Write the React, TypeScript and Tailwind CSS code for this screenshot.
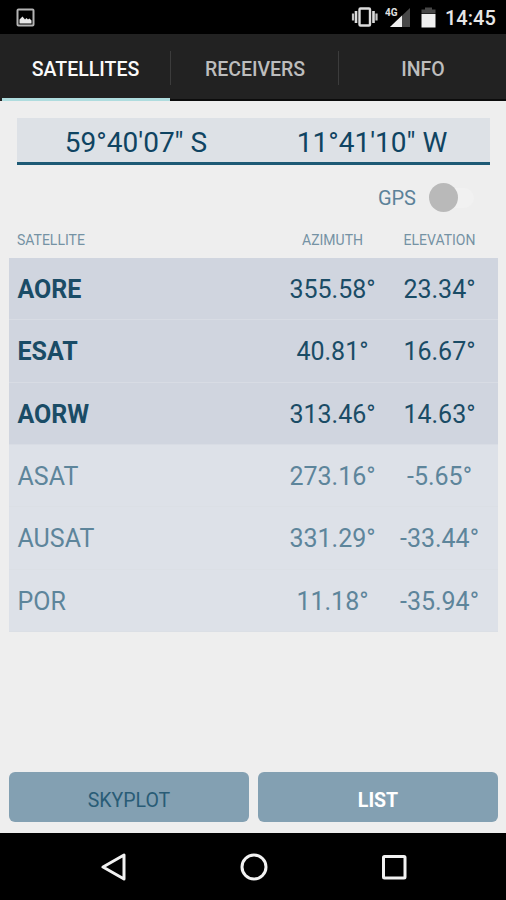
import clsx from "clsx";

type Satellite = {
  name: string;
  azimuth: string;
  elevation: string;
  visible: boolean;
};

const satellites: Satellite[] = [
  { name: "AORE", azimuth: "355.58°", elevation: "23.34°", visible: true },
  { name: "ESAT", azimuth: "40.81°", elevation: "16.67°", visible: true },
  { name: "AORW", azimuth: "313.46°", elevation: "14.63°", visible: true },
  { name: "ASAT", azimuth: "273.16°", elevation: "-5.65°", visible: false },
  { name: "AUSAT", azimuth: "331.29°", elevation: "-33.44°", visible: false },
  { name: "POR", azimuth: "11.18°", elevation: "-35.94°", visible: false },
];

export default function App() {
  return (
    <div className="flex flex-col w-[506px] h-[900px] overflow-hidden bg-[#eeeeee] font-['Roboto',sans-serif]">
      <StatusBar />
      <Tabs />
      <main className="flex flex-col grow pl-[9px] pr-2">
        <Coordinates />
        <GpsSwitch />
        <SatelliteTable />
        <ViewButtons />
      </main>
      <NavBar />
    </div>
  );
}

const StatusBar = () => {
  return (
    <div className="flex items-center justify-between h-[34px] shrink-0 bg-black pl-4 pr-[11px]">
      <svg width="19" height="19" viewBox="0 0 19 19">
        <rect x="1.5" y="1.5" width="16" height="16" rx="1" fill="none" stroke="#b4b4b4" strokeWidth="2" />
        <path d="M3.5 15.5v-4l3-3 2.5 3 1.5-1.5 1.5 1.5 1.5-1 2 2v3z" fill="#e8e8e8" />
      </svg>
      <div className="flex items-center">
        <svg width="27" height="22" viewBox="0 0 27 22">
          <rect x="8.5" y="2.5" width="10.5" height="17" rx="1" fill="none" stroke="#dcdcdc" strokeWidth="2.4" />
          <path d="M5 5v12M22.5 5v12" stroke="#dcdcdc" strokeWidth="2.6" />
          <path d="M2 7.5v7M25.5 7.5v7" stroke="#c4c4c4" strokeWidth="2.2" />
        </svg>
        <svg className="ml-[7px]" width="26" height="22" viewBox="0 0 26 22">
          <path d="M25 2v19H5z" fill="#484848" />
          <path d="M17 9.6V21H5z" fill="#f0f0f0" />
          <text x="0" y="10" fontSize="11" fontWeight="700" fill="#e0e0e0" textLength="12.5" lengthAdjust="spacingAndGlyphs">
            4G
          </text>
        </svg>
        <svg className="ml-[10px]" width="15" height="22" viewBox="0 0 15 22">
          <path d="M4 1.5h7v2h3.5v4H.5v-4H4z" fill="#484848" />
          <path d="M.5 8h14v13.5H.5z" fill="#f0f0f0" />
        </svg>
        <span className="ml-[9px] mt-[2px] w-[50px] text-right text-[20px] leading-5 font-medium text-[#e6e6e6]">
          14:45
        </span>
      </div>
    </div>
  );
};

const Tabs = () => {
  return (
    <div className="flex h-[67px] shrink-0 bg-[#222222] text-[19.5px] font-medium">
      <div className="flex flex-col w-[170px] pl-[2px]">
        <div className="flex grow items-center justify-center pt-[7px] pr-px text-[#fafafa]">
          SATELLITES
        </div>
        <div className="h-[3px] bg-[#afdcde]" />
      </div>
      <Tab label="RECEIVERS" />
      <Tab label="INFO" />
    </div>
  );
};

const Tab = ({ label }: { label: string }) => {
  return (
    <div className="flex grow basis-0 items-center border-b-2 border-[#0c0c0c] text-[#bdbdbd]">
      <div className="w-px h-[34px] mt-[2px] bg-[#3c3c3c]" />
      <div className="grow pt-[6px] pl-px text-center">{label}</div>
    </div>
  );
};

const Coordinates = () => {
  return (
    <div className="grid grid-cols-2 h-[47px] mt-[17px] mx-2 items-center border-b-[3px] border-[#1d5a75] bg-[#dde1e6] pt-[5px] pl-px text-center text-[28px] leading-8 text-[#0f4462]">
      <div>59°40'07" S</div>
      <div>11°41'10" W</div>
    </div>
  );
};

const GpsSwitch = () => {
  return (
    <div className="flex items-center h-[65px] justify-end pr-[24px]">
      <span className="text-[20px] text-[#5c8299]">GPS</span>
      <div className="flex items-center w-[45px] h-5 ml-[13px] rounded-full bg-[#f1f1f1]">
        <div className="size-[29px] shrink-0 rounded-full bg-[#b9b9b9]" />
      </div>
    </div>
  );
};

const SatelliteTable = () => {
  return (
    <div className="flex flex-col">
      <div className="flex items-center h-[28px] pl-2 pr-[5px] pb-[8px] text-[14px] text-[#7592a4]">
        <div className="grow">SATELLITE</div>
        <div className="w-[107px] text-center">AZIMUTH</div>
        <div className="w-[107px] text-center">ELEVATION</div>
      </div>
      <div className="grid grid-rows-6 h-[374px]">
        {satellites.map((satellite) => (
          <SatelliteRow key={satellite.name} {...satellite} />
        ))}
      </div>
    </div>
  );
};

const SatelliteRow = ({ name, azimuth, elevation, visible }: Satellite) => {
  return (
    <div
      className={clsx(
        "flex items-center pt-[2px] pl-2 pr-[5px] border-b text-[25px]",
        visible
          ? "bg-[#d0d5df] border-[#d8dce4] text-[#1a4c66]"
          : "bg-[#dde1e8] border-[#dbdfe5] text-[#5d859b]"
      )}
    >
      <div className={clsx("grow pl-[0.5px]", visible && "font-bold")}>{name}</div>
      <div className="w-[107px] text-center">{azimuth}</div>
      <div className="w-[107px] text-center">{elevation}</div>
    </div>
  );
};

const ViewButtons = () => {
  return (
    <div className="flex gap-[9px] mt-auto mb-[11px] text-[19.5px]">
      <button className="h-[50px] grow basis-0 rounded-[6px] bg-[#83a0b2] pt-[7px] text-[#295c76]">
        SKYPLOT
      </button>
      <button className="h-[50px] grow basis-0 rounded-[6px] bg-[#83a0b2] pt-[7px] font-bold text-white">
        LIST
      </button>
    </div>
  );
};

const NavBar = () => {
  return (
    <div className="flex items-center h-[67px] shrink-0 justify-center gap-[112px] bg-black pl-px">
      <svg width="28" height="28" viewBox="0 0 28 28" fill="none" stroke="#f2f2f2" strokeWidth="3">
        <path d="M24 2v24L3 14z" strokeLinejoin="round" />
      </svg>
      <svg width="28" height="28" viewBox="0 0 28 28" fill="none" stroke="#f2f2f2" strokeWidth="3">
        <circle cx="14" cy="14" r="12" />
      </svg>
      <svg width="28" height="28" viewBox="0 0 28 28" fill="none" stroke="#f2f2f2" strokeWidth="3">
        <rect x="3.5" y="3.5" width="21.5" height="21.5" rx="1" />
      </svg>
    </div>
  );
};
